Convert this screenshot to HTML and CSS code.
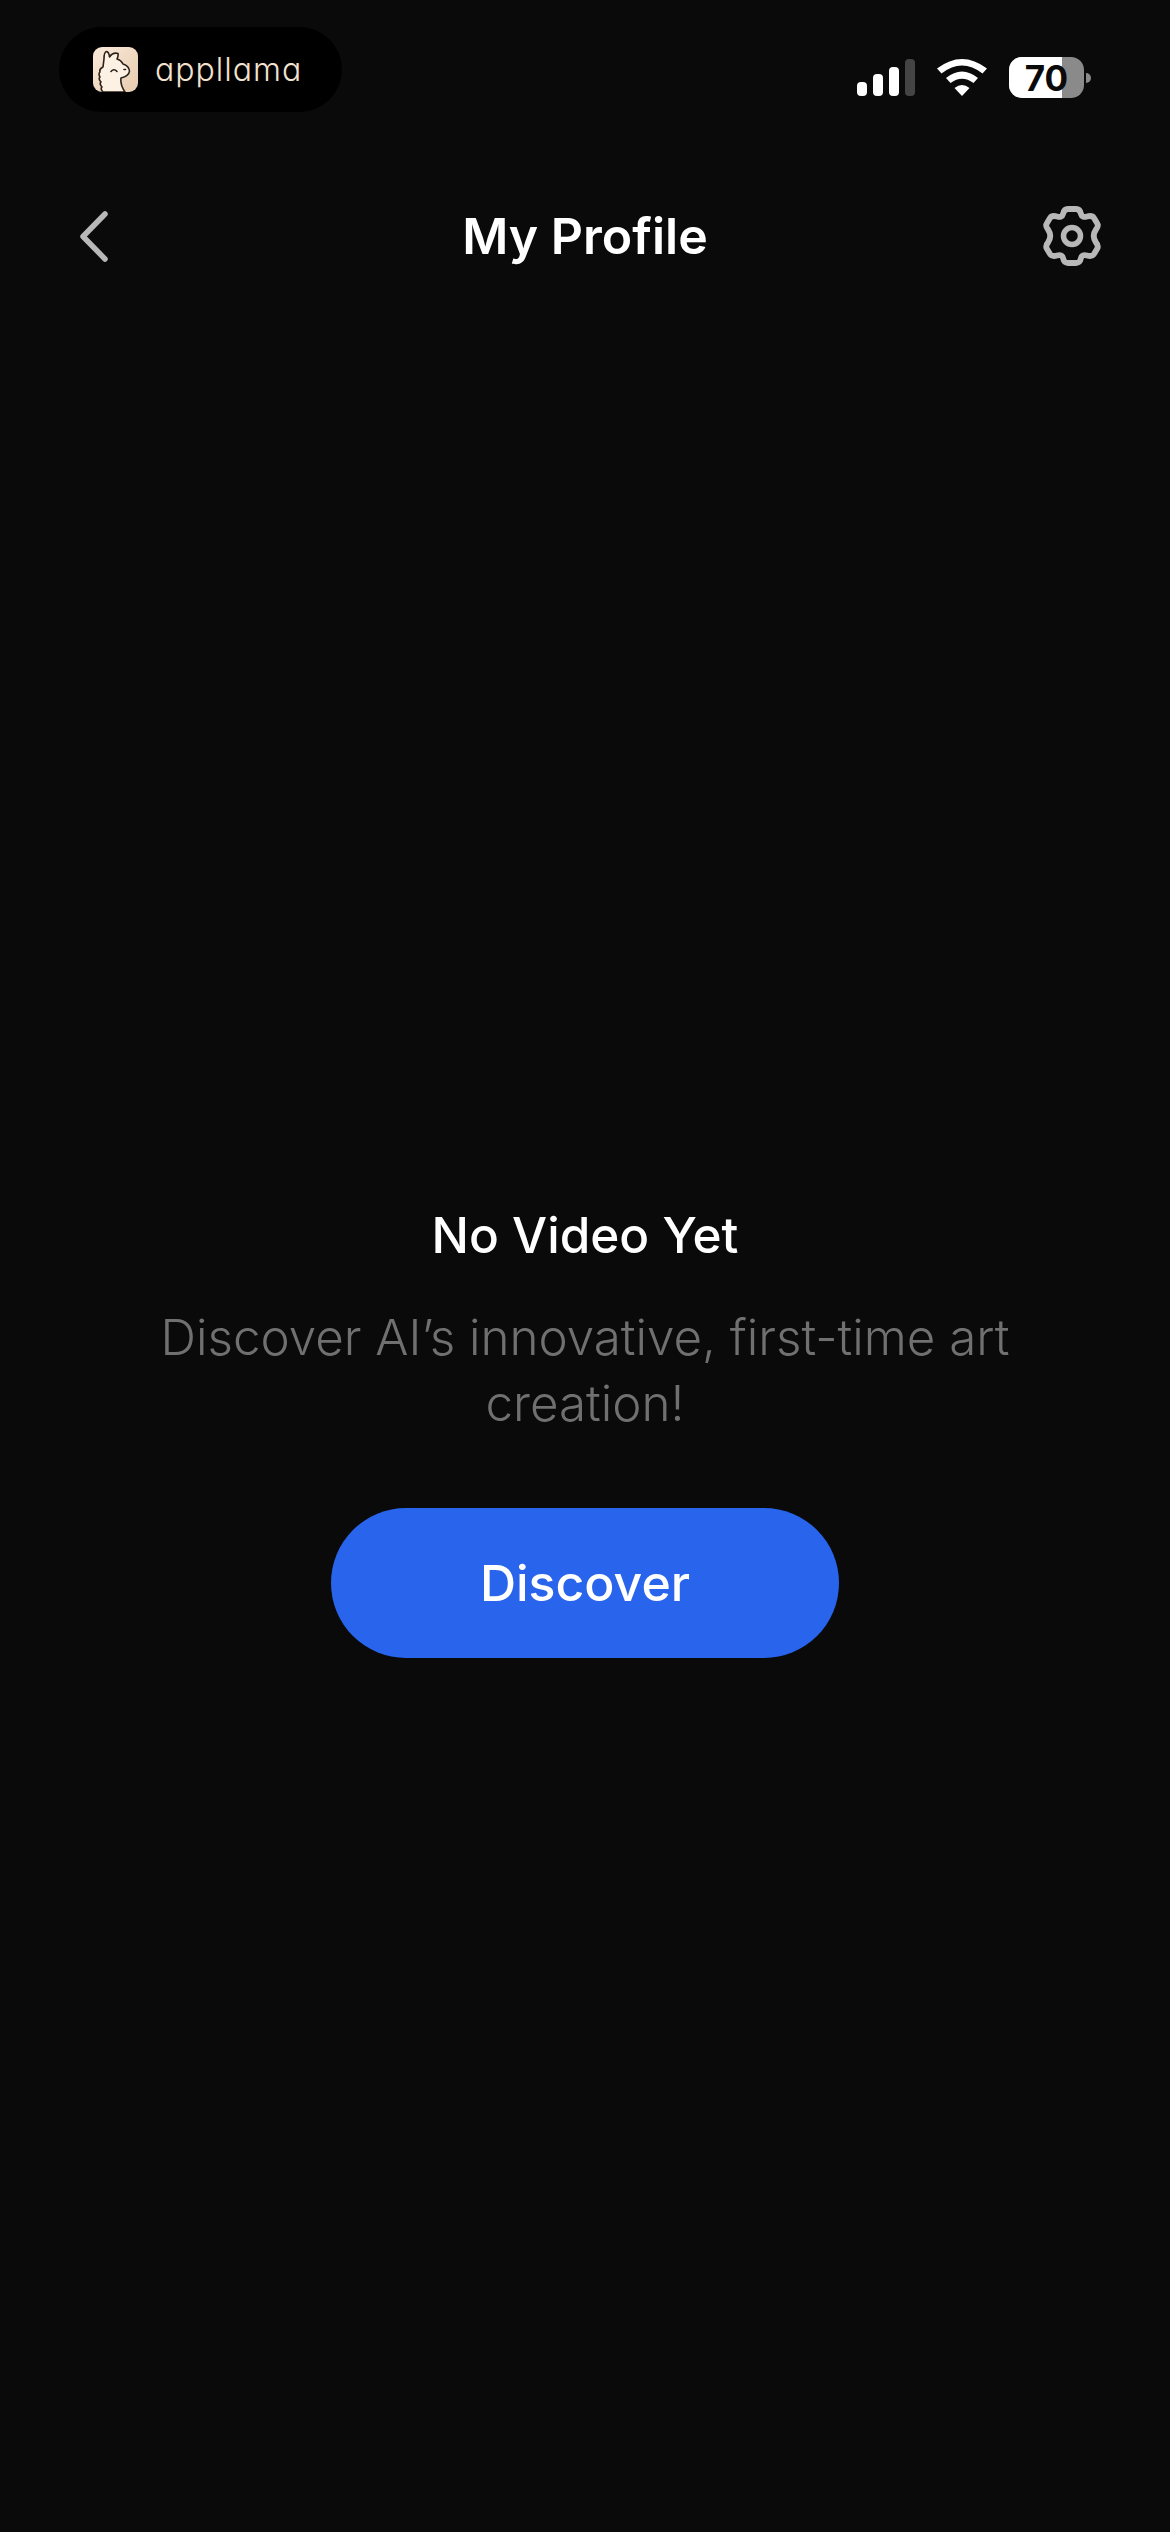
FILE: index.html
```html
<!DOCTYPE html>
<html lang="en">
<head>
    <meta charset="UTF-8">
    <title>My Profile</title>
    <link rel="stylesheet" href="styles.css">
</head>
<body>
    <div class="status-bar">
        <div class="brand">
            <svg class="brand-icon" width="45" height="45" viewBox="0 0 45 45">
                <defs>
                    <linearGradient id="tile" x1="0" y1="0" x2="1" y2="1">
                        <stop offset="0" stop-color="#fbeadb"/>
                        <stop offset="1" stop-color="#e6cbae"/>
                    </linearGradient>
                </defs>
                <rect width="45" height="45" rx="9" fill="url(#tile)"/>
                <path d="M10 45 q-3 -3 -1 -5 q-3 -3 -1 -5 q-3 -3 -1 -5 q-2 -3 0 -5 q-1 -3 3 -5 L11 12 Q11 5 13.500 4.500 Q16 5 16.500 10 Q20 5 25 6.500 Q25.500 9 24 12 Q28 13 30 17 Q36 19 36.500 24 Q36 29 28 31 Q27 38 32 45 Z" fill="#fdf1e4" stroke="#2b211a" stroke-width="1.600" stroke-linejoin="round"/>
                <path d="M18 24.500 Q21 21 24 24.500 M31 22.500 L32.500 22.500" fill="none" stroke="#2b211a" stroke-width="1.600" stroke-linecap="round"/>
            </svg>
            <span class="brand-name">appllama</span>
        </div>
        <div class="status-icons">
            <div class="signal">
                <span class="bar bar-1"></span>
                <span class="bar bar-2"></span>
                <span class="bar bar-3"></span>
                <span class="bar bar-4"></span>
            </div>
            <svg class="wifi" width="50" height="37" viewBox="0 0 50 37">
                <path d="M0 9.500 Q25 -9.500 50 9.500 L45.500 14.500 Q25 -1.500 4.500 14.500 Z" fill="#fff"/>
                <path d="M9 19 Q25 6 41 19 L36.500 24 Q25 15.500 13.500 24 Z" fill="#fff"/>
                <path d="M25 37 L17.500 29 Q25 23 32.500 29 Z" fill="#fff"/>
            </svg>
            <div class="battery">
                <div class="battery-body">
                    <div class="battery-fill"></div>
                    <span class="battery-level">70</span>
                </div>
                <span class="battery-nub"></span>
            </div>
        </div>
    </div>

    <div class="top-nav">
        <div class="nav-side">
            <svg class="back-icon" width="28" height="51" viewBox="0 0 28 51">
                <path d="M25 3 L3 25.500 L25 48" fill="none" stroke="#b8b8b8" stroke-width="5.500" stroke-linecap="round" stroke-linejoin="round"/>
            </svg>
        </div>
        <h1 class="page-title">My Profile</h1>
        <div class="nav-side nav-side-right">
            <svg width="58" height="60" viewBox="0 0 58 60">
                <path d="M20 8 Q21 3 25 3 L33 3 Q37 3 38 8 Q39 12 44 10.500 Q49 9 51 12 L54 17 Q56 20 53 23.500 Q48.500 30 53 36.500 Q56 40 54 43 L51 48 Q49 51 44 49.500 Q39 48 38 52 Q37 57 33 57 L25 57 Q21 57 20 52 Q19 48 14 49.500 Q9 51 7 48 L4 43 Q2 40 5 36.500 Q9.500 30 5 23.500 Q2 20 4 17 L7 12 Q9 9 14 10.500 Q19 12 20 8 Z" fill="none" stroke="#b8b8b8" stroke-width="5.800" stroke-linejoin="round"/>
                <circle cx="29" cy="30" r="8.500" fill="none" stroke="#b8b8b8" stroke-width="5.500"/>
            </svg>
        </div>
    </div>

    <div class="empty-state">
        <h2 class="empty-title">No Video Yet</h2>
        <p class="empty-text">Discover AI’s innovative, first-time art creation!</p>
        <button class="discover-btn">Discover</button>
    </div>
</body>
</html>
```

FILE: styles.css
```css
*{
    margin: 0;
    padding: 0;
    box-sizing: border-box;
}

body{
    background-color: #0a0a0a;
    color: #fff;
    font-family: Inter, "Noto Sans", sans-serif;
    height: 100vh;
    overflow: hidden;
}

.status-bar{
    display: flex;
    justify-content: space-between;
    align-items: flex-start;
    padding: 27px 79px 0 59px;
}

.brand{
    width: 283px;
    height: 85px;
    display: flex;
    align-items: center;
    gap: 17px;
    padding-left: 34px;
    background-color: #000;
    border-radius: 43px;
}

.brand-name{
    font-family: Inter, sans-serif;
    font-feature-settings: "cv11";
    font-weight: 300;
    font-size: 32px;
    letter-spacing: 1px;
    color: #f3e2cf;
}

.status-icons{
    display: flex;
    align-items: center;
    gap: 22px;
    padding-top: 30px;
}

.signal{
    display: flex;
    align-items: flex-end;
    gap: 6px;
    height: 37px;
}

.bar{
    width: 10px;
    background-color: #fff;
    border-radius: 4px;
}

.bar-1{ height: 14px; }
.bar-2{ height: 22px; }
.bar-3{ height: 29px; }
.bar-4{ height: 37px; background-color: #444; }

.battery{
    display: flex;
    align-items: center;
    gap: 2px;
}

.battery-body{
    width: 75px;
    height: 41px;
    background-color: #8a8a8a;
    border-radius: 13px;
    position: relative;
    overflow: hidden;
    display: flex;
    align-items: center;
    justify-content: center;
}

.battery-fill{
    position: absolute;
    top: 0;
    left: 0;
    bottom: 0;
    width: 53px;
    background-color: #fff;
}

.battery-level{
    position: relative;
    font-weight: 700;
    font-size: 35px;
    color: #0a0a0a;
}

.battery-nub{
    width: 5px;
    height: 10px;
    background-color: #8a8a8a;
    border-radius: 0 5px 5px 0;
}

.top-nav{
    display: grid;
    grid-template-columns: 1fr auto 1fr;
    align-items: center;
    padding: 0 69px;
    margin-top: 94px;
    height: 60px;
}

.nav-side{
    display: flex;
}

.nav-side-right{
    justify-content: flex-end;
}

.back-icon{
    margin-left: 11px;
}

.page-title{
    font-size: 50px;
    font-weight: 600;
}

.empty-state{
    display: flex;
    flex-direction: column;
    align-items: center;
    margin-top: 940px;
}

.empty-title{
    font-size: 49.5px;
    font-weight: 500;
    line-height: 58px;
}

.empty-text{
    width: 900px;
    margin-top: 40px;
    font-size: 49.3px;
    font-weight: 350;
    line-height: 66px;
    text-align: center;
    color: #707070;
}

.discover-btn{
    width: 508px;
    height: 150px;
    margin-top: 72px;
    border: none;
    border-radius: 75px;
    background-color: #2864ec;
    color: #fff;
    font-family: inherit;
    font-size: 50px;
    font-weight: 500;
}
```
